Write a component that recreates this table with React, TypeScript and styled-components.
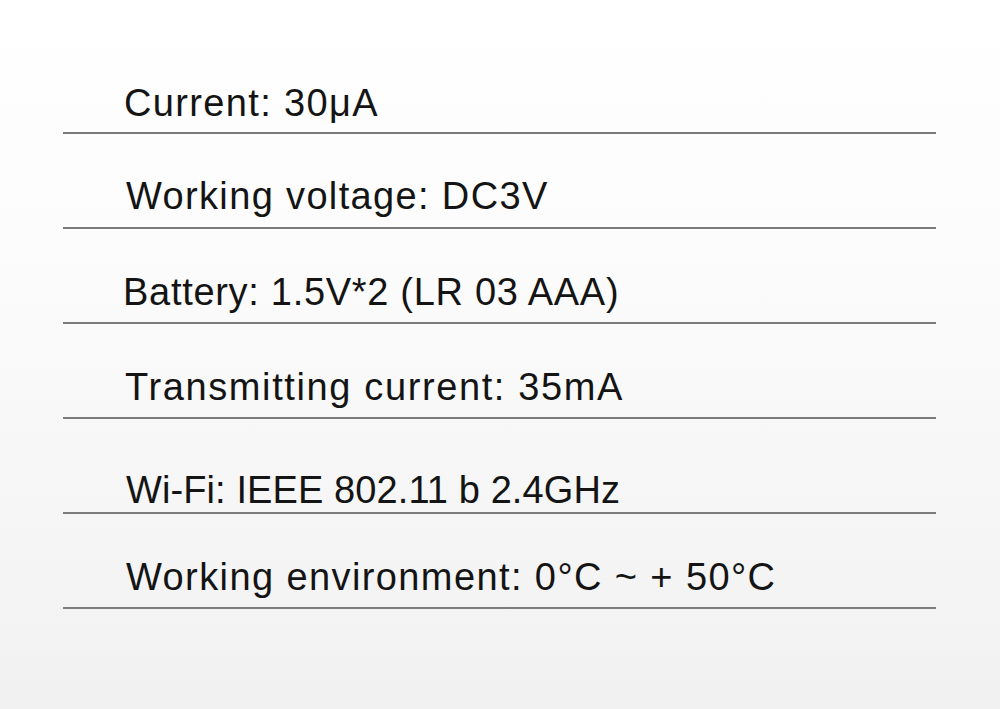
import styled, { createGlobalStyle } from "styled-components";

const GlobalStyle = createGlobalStyle`
  html, body {
    margin: 0;
    padding: 0;
  }
  body {
    width: 1000px;
    height: 709px;
    overflow: hidden;
    background: linear-gradient(180deg, #ffffff 0%, #fbfbfb 40%, #f1f1f1 100%);
    font-family: "Liberation Sans", Arial, Helvetica, sans-serif;
  }
`;

type Spec = {
  text: string;
  indent: number;
  gap: number;
  tracking: number;
};

const specs: Spec[] = [
  { text: "Current: 30μA", indent: 61, gap: 10, tracking: 1.35 },
  { text: "Working voltage: DC3V", indent: 63, gap: 12, tracking: 1.35 },
  { text: "Battery: 1.5V*2 (LR 03 AAA)", indent: 60, gap: 11, tracking: 0.7 },
  { text: "Transmitting current: 35mA", indent: 62, gap: 11, tracking: 1.62 },
  { text: "Wi-Fi: IEEE 802.11 b 2.4GHz", indent: 63, gap: 3, tracking: 0.1 },
  { text: "Working environment: 0°C ~ + 50°C", indent: 63, gap: 11, tracking: 1.4 },
];

export default function App() {
  return (
    <>
      <GlobalStyle />
      <Page>
        <List>
          {specs.map((s) => (
            <Row key={s.text} $indent={s.indent} $gap={s.gap}>
              <Label $tracking={s.tracking}>{s.text}</Label>
            </Row>
          ))}
        </List>
      </Page>
    </>
  );
}

const Page = styled.div`
  width: 1000px;
  height: 709px;
  padding-top: 39px;
  box-sizing: border-box;
`;

const List = styled.div`
  display: flex;
  flex-direction: column;
  width: 873px;
  margin-left: 63px;
`;

const Row = styled.div<{ $indent: number; $gap: number }>`
  height: 95px;
  box-sizing: border-box;
  display: flex;
  align-items: flex-end;
  padding-left: ${(p) => p.$indent}px;
  padding-bottom: ${(p) => p.$gap}px;
  border-bottom: 2px solid #7b7b7b;
`;

const Label = styled.span<{ $tracking: number }>`
  font-size: 38px;
  line-height: 1;
  letter-spacing: ${(p) => p.$tracking}px;
  color: #141414;
  white-space: nowrap;
`;
